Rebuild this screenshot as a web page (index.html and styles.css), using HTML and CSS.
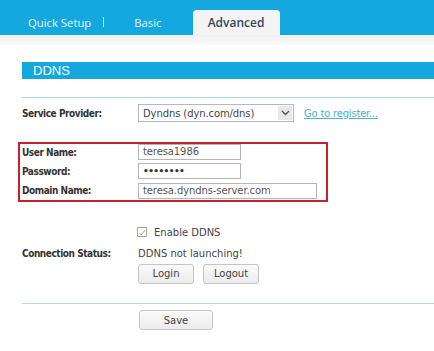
FILE: index.html
```html
<!DOCTYPE html>
<html>
<head>
<meta charset="utf-8">
<link rel="stylesheet" href="styles.css">
</head>
<body>
<div class="topbar">
  <div class="tabs">
    <span class="tab">Quick Setup</span>
    <span class="sep"></span>
    <span class="tab basic">Basic</span>
    <span class="tab active">Advanced</span>
  </div>
</div>
<div class="band"></div>
<div class="content">
  <div class="title">DDNS</div>
  <div class="rule first"></div>
  <div class="row provider">
    <span class="label">Service Provider:</span>
    <span class="select"><span class="sel-text">Dyndns (dyn.com/dns)</span><span class="arrow"><svg width="9" height="6" viewBox="0 0 9 6"><path d="M1 1 L4.5 4.5 L8 1" fill="none" stroke="#555" stroke-width="1.4"/></svg></span></span>
    <a class="link">Go to register...</a>
  </div>
  <div class="redbox">
    <div class="row r1">
      <span class="label">User Name:</span>
      <span class="input short">teresa1986</span>
    </div>
    <div class="row r2">
      <span class="label">Password:</span>
      <span class="input short dots">••••••••</span>
    </div>
    <div class="row r3">
      <span class="label">Domain Name:</span>
      <span class="input long">teresa.dyndns-server.com</span>
    </div>
  </div>
  <div class="row check">
    <span class="label"></span>
    <span class="cb"><svg width="10" height="10" viewBox="0 0 10 10"><path d="M2 5 L4.2 7.5 L8.5 1.5" fill="none" stroke="#8aa860" stroke-width="1.2"/></svg></span>
    <span class="cbtext">Enable DDNS</span>
  </div>
  <div class="row status">
    <span class="label">Connection Status:</span>
    <span class="stext">DDNS not launching!</span>
  </div>
  <div class="row buttons">
    <span class="label"></span>
    <span class="btn login">Login</span>
    <span class="btn logout">Logout</span>
  </div>
  <div class="rule second"></div>
  <div class="row saverow">
    <span class="label"></span>
    <span class="btn save">Save</span>
  </div>
</div>
</body>
</html>
```
FILE: styles.css
```css
html, body {
  margin: 0;
  padding: 0;
  background: #ffffff;
}
body {
  font-family: "DejaVu Sans", Verdana, sans-serif;
  font-size: 10px;
  color: #333;
}
.topbar {
  height: 35px;
  background: #14a8de;
  display: flex;
  align-items: flex-end;
}
.tabs {
  display: flex;
  align-items: flex-end;
  padding-left: 28px;
  height: 25px;
}
.tab {
  font-family: "Open Sans", sans-serif;
  font-size: 11.3px;
  color: #e3f4fb;
  height: 25px;
  line-height: 25px;
}
.sep {
  width: 1px;
  height: 10px;
  background: #cdeef9;
  margin: 0 0 8px 12px;
}
.basic {
  margin-left: 30px;
}
.active {
  margin-left: 31px;
  width: 87px;
  text-align: center;
  background: #f4f4f4;
  border-radius: 4px 4px 0 0;
  color: #34495a;
  font-weight: 600;
  font-size: 12px;
}
.band {
  height: 10px;
  background: linear-gradient(#efefef, #fbfbfb);
}
.content {
  padding-left: 22px;
}
.title {
  margin-top: 17px;
  height: 17px;
  background: #14a8de;
  color: #ffffff;
  font-family: "Liberation Sans", Arial, sans-serif;
  font-size: 13px;
  line-height: 17px;
  padding-left: 11px;
}
.rule {
  height: 1px;
  background: #a9d8dc;
}
.rule.first {
  margin-top: 18px;
}
.row {
  display: flex;
  align-items: center;
}
.label {
  width: 116px;
  flex: none;
  font-family: "DejaVu Sans Condensed", "DejaVu Sans", sans-serif;
  font-weight: bold;
  letter-spacing: -0.45px;
  color: #333;
  font-size: 10px;
}
.provider {
  margin-top: 6px;
  height: 18px;
}
.select {
  width: 156px;
  border: 1px solid #b8b8b8;
  display: flex;
  align-items: center;
  box-sizing: border-box;
  height: 18px;
  color: #444;
}
.sel-text {
  flex: 1;
  padding-left: 4px;
  letter-spacing: -0.1px;
}
.arrow {
  width: 14px;
  height: 14px;
  margin-right: 1px;
  background: #e8e8e8;
  display: flex;
  align-items: center;
  justify-content: center;
}
.link {
  margin-left: 10px;
  color: #4fb0c6;
  text-decoration: underline;
  letter-spacing: -0.2px;
}
.redbox {
  margin-left: -4px;
  margin-top: 20px;
  width: 310px;
  height: 60px;
  box-sizing: border-box;
  border: 2px solid #c8202e;
  padding: 0 0 0 2px;
}
.input {
  height: 16px;
  box-sizing: border-box;
  border: 1px solid #b5b5b5;
  padding-left: 4px;
  line-height: 14px;
  color: #555;
  font-size: 10px;
  letter-spacing: -0.1px;
}
.short {
  width: 103px;
}
.long {
  width: 179px;
}
.dots {
  font-size: 9px;
  font-weight: bold;
  letter-spacing: -0.6px;
  color: #333;
}
.r1 {
  height: 16px;
}
.r2 {
  height: 16px;
  margin-top: 3px;
}
.r3 {
  height: 17px;
  margin-top: 3px;
}
.check {
  margin-top: 24px;
  height: 12px;
}
.cb {
  width: 10px;
  height: 10px;
  border: 1px solid #a8a8a8;
  box-sizing: border-box;
  display: flex;
  margin-left: -1px;
}
.cbtext {
  margin-left: 7px;
  color: #444;
}
.status {
  margin-top: 9px;
  height: 12px;
}
.stext {
  color: #444;
}
.buttons {
  margin-top: 4px;
  height: 21px;
}
.btn {
  height: 20px;
  box-sizing: border-box;
  border: 1px solid #c4c4c4;
  border-radius: 3px;
  background: linear-gradient(#fafafa, #ececec);
  display: flex;
  align-items: center;
  justify-content: center;
  color: #444;
}
.login {
  width: 56px;
}
.logout {
  width: 56px;
  margin-left: 9px;
}
.rule.second {
  margin-top: 19px;
  background: #b2dcdc;
}
.saverow {
  margin-top: 6px;
}
.save {
  width: 74px;
  margin-left: 1px;
}
```
